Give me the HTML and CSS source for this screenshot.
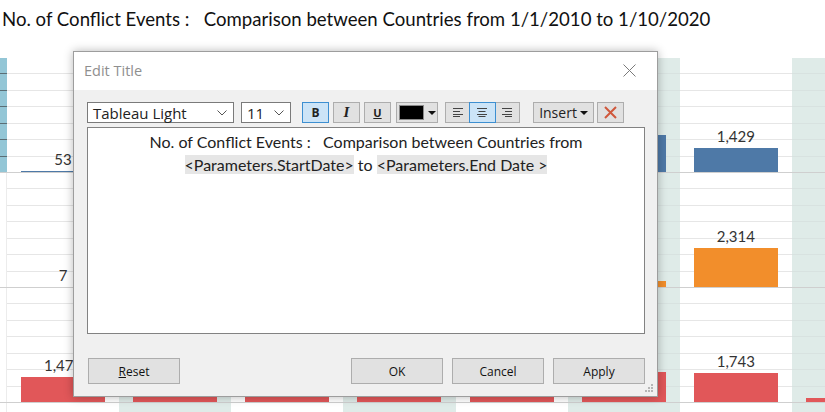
FILE: index.html
```html
<!DOCTYPE html>
<html>
<head>
<meta charset="utf-8">
<link rel="stylesheet" href="styles.css">
</head>
<body>
<div class="page">
  <div class="chart-title">No. of Conflict Events :   Comparison between Countries from 1/1/2010 to 1/10/2020</div>
  <div class="chart">
    <div class="pane">
      <div class="cell axis axis-hl"></div>
      <div class="cell"><span class="lbl">53</span><span class="bar blue" style="height:1px"></span></div>
      <div class="cell band"><span class="bar blue" style="height:10px"></span></div>
      <div class="cell"><span class="bar blue" style="height:7px"></span></div>
      <div class="cell band"><span class="bar blue" style="height:16px"></span></div>
      <div class="cell"><span class="bar blue" style="height:19px"></span></div>
      <div class="cell band"><span class="bar blue" style="height:37px"></span></div>
      <div class="cell"><span class="lbl">1,429</span><span class="bar blue" style="height:24px"></span></div>
      <div class="cell band"></div>
    </div>
    <div class="pane">
      <div class="cell axis"></div>
      <div class="cell"><span class="lbl">7</span><span class="bar orange" style="height:0px"></span></div>
      <div class="cell band"><span class="bar orange" style="height:4px"></span></div>
      <div class="cell"><span class="bar orange" style="height:2px"></span></div>
      <div class="cell band"><span class="bar orange" style="height:8px"></span></div>
      <div class="cell"><span class="bar orange" style="height:5px"></span></div>
      <div class="cell band"><span class="bar orange" style="height:6px"></span></div>
      <div class="cell"><span class="lbl">2,314</span><span class="bar orange" style="height:39px"></span></div>
      <div class="cell band"></div>
    </div>
    <div class="pane">
      <div class="cell axis"></div>
      <div class="cell"><span class="lbl">1,474</span><span class="bar red" style="height:25px"></span></div>
      <div class="cell band"><span class="bar red" style="height:28px"></span></div>
      <div class="cell"><span class="bar red" style="height:22px"></span></div>
      <div class="cell band"><span class="bar red" style="height:27px"></span></div>
      <div class="cell"><span class="bar red" style="height:27px"></span></div>
      <div class="cell band"><span class="bar red" style="height:30px"></span></div>
      <div class="cell"><span class="lbl">1,743</span><span class="bar red" style="height:29px"></span></div>
      <div class="cell band"><span class="bar red" style="height:4px"></span></div>
    </div>
    <div class="pane foot">
      <div class="cell axis"></div>
      <div class="cell"></div>
      <div class="cell band"></div>
      <div class="cell"></div>
      <div class="cell band"></div>
      <div class="cell"></div>
      <div class="cell band"></div>
      <div class="cell"></div>
      <div class="cell band"></div>
    </div>
  </div>

  <div class="dialog">
    <div class="dlg-head">
      <span class="dlg-title">Edit Title</span>
      <svg class="close" width="13" height="13" viewBox="0 0 13 13"><path d="M0.5 0.5 L12.5 12.5 M12.5 0.5 L0.5 12.5" stroke="#7a7a7a" stroke-width="1" fill="none"/></svg>
    </div>
    <div class="dlg-body">
      <div class="toolbar">
        <div class="combo combo-font"><span>Tableau Light</span><svg class="chev" width="10" height="6" viewBox="0 0 10 6"><path d="M0.5 0.5 L5 5 L9.5 0.5" stroke="#555" fill="none"/></svg></div>
        <div class="combo combo-size"><span>11</span><svg class="chev" width="10" height="6" viewBox="0 0 10 6"><path d="M0.5 0.5 L5 5 L9.5 0.5" stroke="#555" fill="none"/></svg></div>
        <div class="tbtn on fmt-b">B</div>
        <div class="tbtn fmt-i">I</div>
        <div class="tbtn fmt-u">U</div>
        <div class="tbtn color"><span class="swatch"></span><span class="tri"></span></div>
        <div class="align-group">
          <div class="aseg"><svg width="10" height="9" viewBox="0 0 10 9"><path d="M0 0.5H10M0 3.5H7M0 6.5H10M0 8.5H7" stroke="#444" stroke-width="1"/></svg></div>
          <div class="aseg on"><svg width="10" height="9" viewBox="0 0 10 9"><path d="M0 0.5H10M1.5 3.5H8.5M0 6.5H10M1.5 8.5H8.5" stroke="#444" stroke-width="1"/></svg></div>
          <div class="aseg"><svg width="10" height="9" viewBox="0 0 10 9"><path d="M0 0.5H10M3 3.5H10M0 6.5H10M3 8.5H10" stroke="#444" stroke-width="1"/></svg></div>
        </div>
        <div class="tbtn insert">Insert<span class="tri small"></span></div>
        <div class="tbtn clear"><svg width="13" height="13" viewBox="0 0 13 13"><path d="M1 1 L12 12 M12 1 L1 12" stroke="#d0583c" stroke-width="2" fill="none"/></svg></div>
      </div>
      <div class="editor">
        <div class="eline">No. of Conflict Events :   Comparison between Countries from</div>
        <div class="eline"><span class="param">&lt;Parameters.StartDate&gt;</span> to <span class="param">&lt;Parameters.End Date &gt;</span></div>
      </div>
      <div class="actions">
        <div class="btn"><span class="u">R</span>eset</div>
        <div class="spacer"></div>
        <div class="btn">OK</div>
        <div class="btn">Cancel</div>
        <div class="btn">Apply</div>
      </div>
      <svg class="grip" width="8" height="8" viewBox="0 0 8 8"><g fill="#b5b5b5"><rect x="6" y="0" width="2" height="2"/><rect x="3" y="3" width="2" height="2"/><rect x="6" y="3" width="2" height="2"/><rect x="0" y="6" width="2" height="2"/><rect x="3" y="6" width="2" height="2"/><rect x="6" y="6" width="2" height="2"/></g></svg>
    </div>
  </div>
</div>
</body>
</html>
```
FILE: styles.css
```css
html, body {
  margin: 0;
  padding: 0;
  background: #fff;
}
.page {
  position: relative;
  width: 825px;
  height: 412px;
  overflow: hidden;
  font-family: "Lato", "Open Sans", sans-serif;
}
.chart-title {
  height: 58px;
  box-sizing: border-box;
  padding: 8px 0 0 2px;
  font-size: 18.6px;
  line-height: 22px;
  color: #111;
  white-space: pre;
}
.chart {
  display: flex;
  flex-direction: column;
}
.pane {
  display: grid;
  grid-template-columns: 7px repeat(8, 112.14px);
  height: 115px;
  box-sizing: border-box;
  border-bottom: 1px solid #cfcfcf;
}
.pane.foot {
  height: 20px;
  border-bottom: 0;
}
.cell {
  display: flex;
  flex-direction: column;
  justify-content: flex-end;
  align-items: center;
  background:
    repeating-linear-gradient(to bottom, transparent 0, transparent 15.43px, #e6e6e6 15.43px, #e6e6e6 16.43px),
    #fff;
  min-width: 0;
}
.cell.band {
  background:
    repeating-linear-gradient(to bottom, transparent 0, transparent 15.43px, #d8e2e0 15.43px, #d8e2e0 16.43px),
    #dfebe8;
}
.foot .cell { background: #fff; }
.foot .cell.band { background: #dfebe8; }
.cell.axis {
  background: #fff;
  border-right: 1px solid #ececec;
  box-sizing: border-box;
}
.cell.axis.axis-hl {
  border-right: 0;
  background:
    repeating-linear-gradient(to bottom, transparent 0, transparent 15.43px, #5a6e75 15.43px, #5a6e75 16.43px),
    #93c6d6;
}
.lbl {
  font-size: 15px;
  line-height: 15px;
  color: #333;
  margin-bottom: 4px;
  white-space: nowrap;
}
.bar {
  display: block;
  width: 84px;
}
.bar.blue { background: #4e79a7; }
.bar.orange { background: #f28e2b; }
.bar.red { background: #e15759; }

/* dialog */
.dialog {
  position: absolute;
  left: 73px;
  top: 51px;
  width: 585px;
  height: 346px;
  box-sizing: border-box;
  border: 1px solid #9d9d9d;
  background: #f0f0f0;
  box-shadow: 0 0 9px rgba(0, 0, 0, 0.28);
  display: flex;
  flex-direction: column;
  font-family: "Open Sans", "Noto Sans", sans-serif;
  color: #1e1e1e;
}
.dlg-head {
  height: 38px;
  background: #fff;
  display: flex;
  align-items: center;
  justify-content: space-between;
  padding: 0 21px 2px 10px;
  box-sizing: border-box;
}
.dlg-title {
  font-size: 14.5px;
  color: #8f8f8f;
}
.dlg-body {
  position: relative;
  flex: 1;
  padding: 12px 12px 0 13px;
  display: flex;
  flex-direction: column;
}
.toolbar {
  display: flex;
  height: 21px;
  align-items: stretch;
}
.combo {
  box-sizing: border-box;
  background: #fff;
  border: 1px solid #7a7a7a;
  display: flex;
  align-items: center;
  justify-content: space-between;
  padding: 0 6px 0 5px;
  font-size: 15px;
  color: #222;
}
.combo-font { width: 147px; }
.combo-size { width: 50px; margin-left: 7px; }
.chev { flex: none; }
.tbtn {
  box-sizing: border-box;
  border: 1px solid #adadad;
  background: #e1e1e1;
  display: flex;
  align-items: center;
  justify-content: center;
  width: 27px;
  margin-left: 4px;
  color: #222;
}
.tbtn.on {
  background: #cce4f7;
  border-color: #3d8fd1;
}
.fmt-b {
  margin-left: 11px;
  font-weight: 700;
  font-size: 12px;
}
.fmt-i {
  font-family: "Liberation Serif", serif;
  font-style: italic;
  font-weight: 700;
  font-size: 15px;
}
.fmt-u {
  font-weight: 700;
  font-size: 11px;
  text-decoration: underline;
}
.tbtn.color {
  width: 42px;
  margin-left: 5px;
  justify-content: flex-start;
  padding-left: 2px;
}
.swatch {
  width: 25px;
  height: 15px;
  background: #000;
  border: 1px solid #8a8a8a;
  box-sizing: border-box;
}
.tri {
  width: 0;
  height: 0;
  border-left: 4px solid transparent;
  border-right: 4px solid transparent;
  border-top: 4px solid #111;
  margin-left: 4px;
}
.tri.small {
  margin-left: 3px;
}
.align-group {
  margin-left: 7px;
  width: 75px;
  box-sizing: border-box;
  border: 1px solid #adadad;
  background: #e1e1e1;
  display: flex;
}
.aseg {
  flex: 1;
  display: flex;
  align-items: center;
  justify-content: center;
  box-sizing: border-box;
}
.aseg.on {
  background: #cce4f7;
  outline: 1px solid #3d8fd1;
}
.tbtn.insert {
  width: 61px;
  margin-left: 13px;
  font-size: 14px;
}
.tbtn.clear {
  margin-left: 3px;
}
.editor {
  margin-top: 4px;
  height: 207px;
  box-sizing: border-box;
  background: #fff;
  border: 1px solid #828282;
  padding-top: 2px;
  font-family: "Lato", sans-serif;
  font-size: 16px;
  color: #222;
  text-align: center;
}
.eline {
  line-height: 23px;
  white-space: pre;
}
.param {
  background: #e6e6e6;
}
.actions {
  margin-top: 24px;
  display: flex;
  height: 26px;
  padding-left: 1px;
}
.spacer { flex: 1; }
.btn {
  width: 92px;
  box-sizing: border-box;
  border: 1px solid #adadad;
  background: #e1e1e1;
  display: flex;
  align-items: center;
  justify-content: center;
  font-size: 12px;
  color: #111;
  margin-left: 9px;
}
.btn:first-child { margin-left: 0; }
.u { text-decoration: underline; }
.grip {
  position: absolute;
  right: 4px;
  bottom: 4px;
}
```
